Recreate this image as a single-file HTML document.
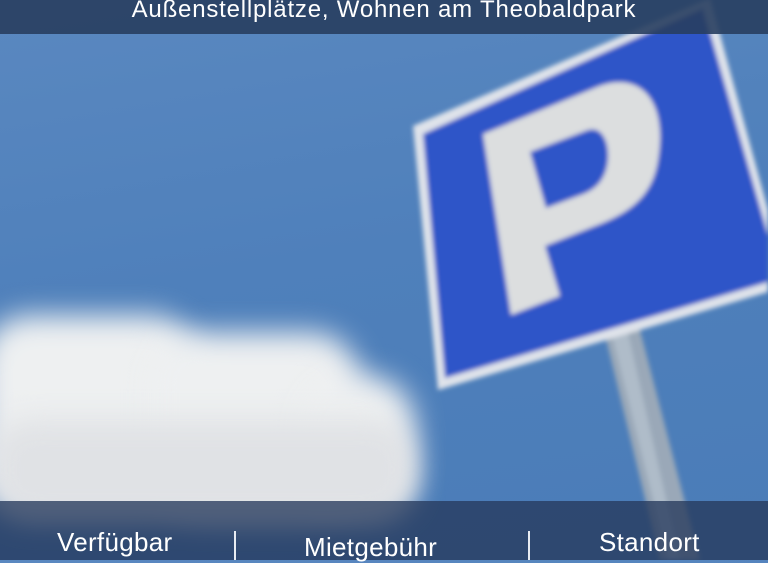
<!DOCTYPE html>
<html><head><meta charset="utf-8">
<style>
html,body{margin:0;padding:0}
body{width:768px;height:560px;overflow:hidden;position:relative;font-family:"Liberation Sans",sans-serif;
background:linear-gradient(170deg,#5a88c0 0%,#4f80bb 45%,#4a7cb8 100%);}
.cloud{position:absolute;background:#eef0f1;filter:blur(14px)}
.bar{position:absolute;left:0;width:768px;color:#fff}
.top{top:0;height:34px;background:rgba(40,62,95,0.9);text-align:center;font-size:24px;line-height:22px;letter-spacing:0.8px}
.bot{top:501px;height:59px;background:rgba(38,58,92,0.78)}
.lbl{position:absolute;font-size:26px;letter-spacing:0.3px;color:#fff}
.div{position:absolute;top:531px;width:2px;height:29px;background:#e8ecf2}
</style></head><body>
<div class="cloud" style="left:-20px;top:315px;width:220px;height:200px;border-radius:50px"></div>
<div class="cloud" style="left:150px;top:332px;width:210px;height:190px;border-radius:50px"></div>
<div class="cloud" style="left:300px;top:375px;width:115px;height:145px;border-radius:50px"></div>
<div class="cloud" style="left:-10px;top:420px;width:425px;height:100px;border-radius:40px;background:#e0e2e5"></div>
<svg width="768" height="560" style="position:absolute;left:0;top:0">
<defs><filter id="b"><feGaussianBlur stdDeviation="2.5"/></filter></defs>
<g filter="url(#b)">
<polygon points="605,335 640,330 700,560 660,560" fill="#9aa8b8"/>
<polygon points="612,335 628,333 680,560 668,560" fill="#b8c4d0" opacity=".7"/>
<polygon points="413,126 710,-2 768,210 768,292 438,390" fill="#dfe3ea"/>
<polygon points="423,134 703,8 768,235 768,282 445,378" fill="#2f55c8"/>
<path fill-rule="evenodd" fill="#dcdedf" d="M483,134 L597,87 C640,70 668,100 658,160 C652,200 625,215 590,228 L545,246 L560,296 L511,315 Z M530,152 L588,130 C605,125 612,150 606,170 C601,186 590,192 578,196 L546,208 Z"/>
</g>
</svg>
<div class="bar top"><div style="margin-top:-1px">Außenstellplätze, Wohnen am Theobaldpark</div></div>
<div class="bar bot"></div>
<div class="lbl" style="left:57px;top:527px">Verfügbar</div>
<div class="lbl" style="left:304px;top:532px">Mietgebühr</div>
<div class="lbl" style="left:599px;top:527px">Standort</div>
<div class="div" style="left:234px"></div>
<div class="div" style="left:528px"></div>
</body></html>
